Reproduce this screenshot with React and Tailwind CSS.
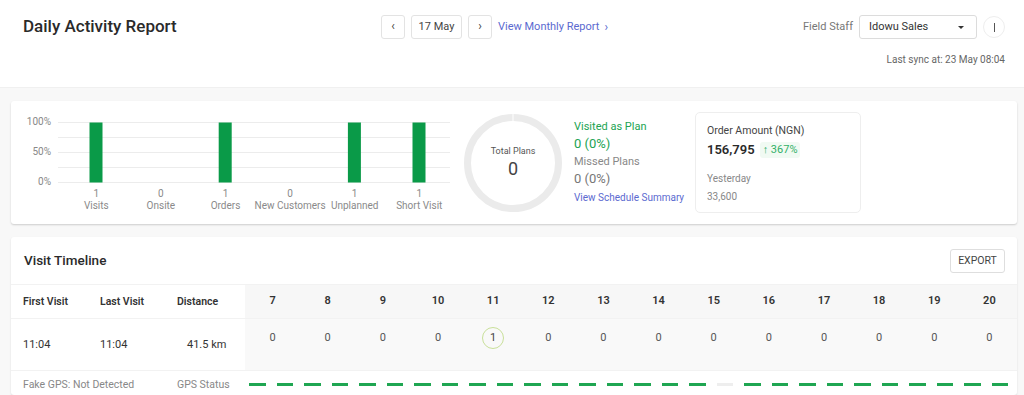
import React from 'react';

/**
 * Daily Activity Report - single page dashboard
 */

const categories = [
  { label: 'Visits', value: 1 },
  { label: 'Onsite', value: 0 },
  { label: 'Orders', value: 1 },
  { label: 'New Customers', value: 0 },
  { label: 'Unplanned', value: 1 },
  { label: 'Short Visit', value: 1 },
];

const hours = [7, 8, 9, 10, 11, 12, 13, 14, 15, 16, 17, 18, 19, 20];
const counts = [0, 0, 0, 0, 1, 0, 0, 0, 0, 0, 0, 0, 0, 0];

// half-hour gps segments, index 17 had no signal
const gps = Array.from({ length: 28 }, (_, i) => i !== 17);

const NavButton = ({ children, className = '' }) => (
  <button className={`h-[24px] flex items-center justify-center border border-[#e3e3e3] rounded-[3px] bg-white text-[11px] text-[#444] ${className}`}>
    {children}
  </button>
);

const BarChart = () => (
  <div className="flex flex-col w-[439px]">
    <div className="flex">
      <div className="w-[47px] flex flex-col items-end pr-[7px] text-[10px] text-[#888] leading-none">
        <span className="h-[30px] -mt-[5px]">100%</span>
        <span className="h-[30px]">50%</span>
        <span>0%</span>
      </div>
      <svg width="392" height="61" className="block">
        {[0, 15, 30, 45, 60].map((y) => (
          <line key={y} x1="0" x2="392" y1={y + 0.5} y2={y + 0.5} stroke="#ececec" strokeWidth="1" />
        ))}
        {categories.map((c, i) =>
          c.value > 0 ? (
            <rect key={c.label} x={31.5 + i * 64.6} y="0.5" width="13" height="60" fill="#0a9a48" />
          ) : null
        )}
      </svg>
    </div>
    <div className="flex ml-[53px] mt-[1px]">
      {categories.map((c) => (
        <div key={c.label} className="w-[64.6px] shrink-0 flex flex-col items-center text-[10px] leading-[12px] text-[#8a8a8a] whitespace-nowrap">
          <span>{c.value}</span>
          <span>{c.label}</span>
        </div>
      ))}
    </div>
  </div>
);

const Donut = () => (
  <div className="relative w-[100px] h-[100px]">
    <svg width="100" height="100" className="block">
      <circle cx="50" cy="50" r="45.5" fill="none" stroke="#ebebeb" strokeWidth="7" />
      <line x1="50" y1="1" x2="50" y2="9" stroke="#fff" strokeWidth="1" />
    </svg>
    <div className="absolute inset-0 flex flex-col items-center justify-center">
      <span className="text-[9px] text-[#555]">Total Plans</span>
      <span className="text-[18px] leading-[22px] text-[#444]">0</span>
    </div>
  </div>
);

export default function App() {
  return (
    <div className="min-h-screen bg-[#f8f8f8] font-['Roboto',sans-serif] text-[#333]">
      {/* Header */}
      <div className="bg-white h-[88px] border-b border-[#f0f0f0] pl-[23px] pr-[19px] pt-[15px]">
        <div className="flex items-center h-[24px]">
          <h1 className="w-[358px] text-[17px] font-medium text-[#2a2a2a]">Daily Activity Report</h1>
          <div className="flex items-center gap-[6px]">
            <NavButton className="w-[24px]">
              <span className="text-[12px] leading-none -mt-[2px]">‹</span>
            </NavButton>
            <NavButton className="w-[51px]">17 May</NavButton>
            <NavButton className="w-[24px]">
              <span className="text-[12px] leading-none -mt-[2px]">›</span>
            </NavButton>
            <a className="text-[11px] text-[#5b6ad0] flex items-center gap-[5px]">
              View Monthly Report <span className="text-[12px] -mt-[1px]">›</span>
            </a>
          </div>
          <div className="flex-1" />
          <span className="text-[11px] text-[#777] mr-[6px]">Field Staff</span>
          <div className="w-[118px] h-[24px] border border-[#dcdcdc] rounded-[3px] flex items-center justify-between pl-[9px] pr-[12px] text-[11px] text-[#333]">
            <span>Idowu Sales</span>
            <span className="w-0 h-0 border-l-[3px] border-r-[3px] border-t-[3px] border-l-transparent border-r-transparent border-t-[#333]" />
          </div>
          <div className="ml-[6px] w-[22px] h-[22px] rounded-full border border-[#eee] flex items-center justify-center">
            <span className="w-[1px] h-[9px] bg-[#555]" />
          </div>
        </div>
        <div className="mt-[13px] text-right text-[10px] text-[#666]">Last sync at: 23 May 08:04</div>
      </div>

      {/* Summary card */}
      <div className="ml-[11px] mr-[7px] mt-[13px] h-[123px] bg-white rounded-[3px] shadow-[0_1px_2px_rgba(0,0,0,0.18)] flex items-center">
        <div className="pt-[8px]">
          <BarChart />
        </div>
        <div className="ml-[13px]">
          <Donut />
        </div>
        <div className="ml-[11px] flex flex-col w-[121px] -mt-[1px]">
          <span className="text-[11px] leading-[14px] text-[#21a352]">Visited as Plan</span>
          <span className="text-[13px] leading-[18px] text-[#21a352] mt-[1px]">0 (0%)</span>
          <span className="text-[11px] leading-[14px] text-[#888] mt-[2px]">Missed Plans</span>
          <span className="text-[13px] leading-[18px] text-[#777] mt-[1px]">0 (0%)</span>
          <span className="text-[10px] leading-[14px] text-[#5b6ad0] mt-[3px] whitespace-nowrap">View Schedule Summary</span>
        </div>
        <div className="w-[166px] h-[101px] border border-[#eeeeee] rounded-[5px] px-[11px] pt-[11px]">
          <div className="text-[10.5px] leading-[14px] text-[#444]">Order Amount (NGN)</div>
          <div className="flex items-center mt-[2px]">
            <span className="text-[13px] font-semibold text-[#2a2a2a]">156,795</span>
            <span className="ml-[5px] px-[3px] rounded-[3px] bg-[#f1faf3] text-[11px] leading-[16px] text-[#32b067]">↑ 367%</span>
          </div>
          <div className="text-[10px] leading-[14px] text-[#888] mt-[12px]">Yesterday</div>
          <div className="text-[10px] leading-[14px] text-[#888] mt-[4px]">33,600</div>
        </div>
      </div>

      {/* Visit Timeline */}
      <div className="ml-[11px] mr-[7px] mt-[13px] bg-white rounded-[3px] shadow-[0_1px_2px_rgba(0,0,0,0.12)]">
        <div className="h-[48px] flex items-center justify-between pl-[13px] pr-[12px] border-b border-[#f2f2f2]">
          <span className="text-[13.5px] font-medium text-[#2a2a2a]">Visit Timeline</span>
          <button className="w-[55px] h-[24px] border border-[#dedede] rounded-[3px] text-[10.5px] text-[#444] -mb-[1px]">EXPORT</button>
        </div>

        {/* header row */}
        <div className="flex h-[34px] border-b border-[#f2f2f2]">
          <div className="w-[234px] flex items-center pl-[12px] text-[10.5px] font-semibold text-[#333]">
            <span className="w-[77px]">First Visit</span>
            <span className="w-[77px]">Last Visit</span>
            <span>Distance</span>
          </div>
          <div className="flex-1 flex bg-[#f7f7f7]">
            {hours.map((h) => (
              <div key={h} className="flex-1 flex items-center justify-center text-[11px] font-semibold text-[#333]">
                {h}
              </div>
            ))}
          </div>
        </div>

        {/* values row */}
        <div className="flex h-[52px] border-b border-[#f2f2f2]">
          <div className="w-[234px] flex items-center pl-[12px] pt-[2px] text-[11px] text-[#333]">
            <span className="w-[77px]">11:04</span>
            <span className="w-[77px]">11:04</span>
            <span className="ml-[10px]">41.5 km</span>
          </div>
          <div className="flex-1 flex bg-[#f9f9f9]">
            {counts.map((c, i) => (
              <div key={i} className="flex-1 flex justify-center pt-[8px]">
                {c > 0 ? (
                  <span className="w-[22px] h-[22px] rounded-full border-[1.5px] border-[#c9e09a] flex items-center justify-center text-[11px] text-[#444]">
                    {c}
                  </span>
                ) : (
                  <span className="h-[22px] flex items-center text-[11px] text-[#555]">{c}</span>
                )}
              </div>
            ))}
          </div>
        </div>

        {/* gps row */}
        <div className="flex h-[24px] pt-[3px]">
          <div className="w-[234px] flex items-center pl-[12px] text-[10.5px] text-[#888]">
            <span className="w-[154px]">Fake GPS: Not Detected</span>
            <span>GPS Status</span>
          </div>
          <div className="flex-1 flex items-center pr-[2px]">
            {gps.map((ok, i) => (
              <div key={i} className="flex-1 pl-[4px] pr-[7px]">
                <div className={`h-[3px] ${ok ? 'bg-[#1fa652]' : 'bg-[#eeeeee]'}`} />
              </div>
            ))}
          </div>
        </div>
      </div>
    </div>
  );
}
